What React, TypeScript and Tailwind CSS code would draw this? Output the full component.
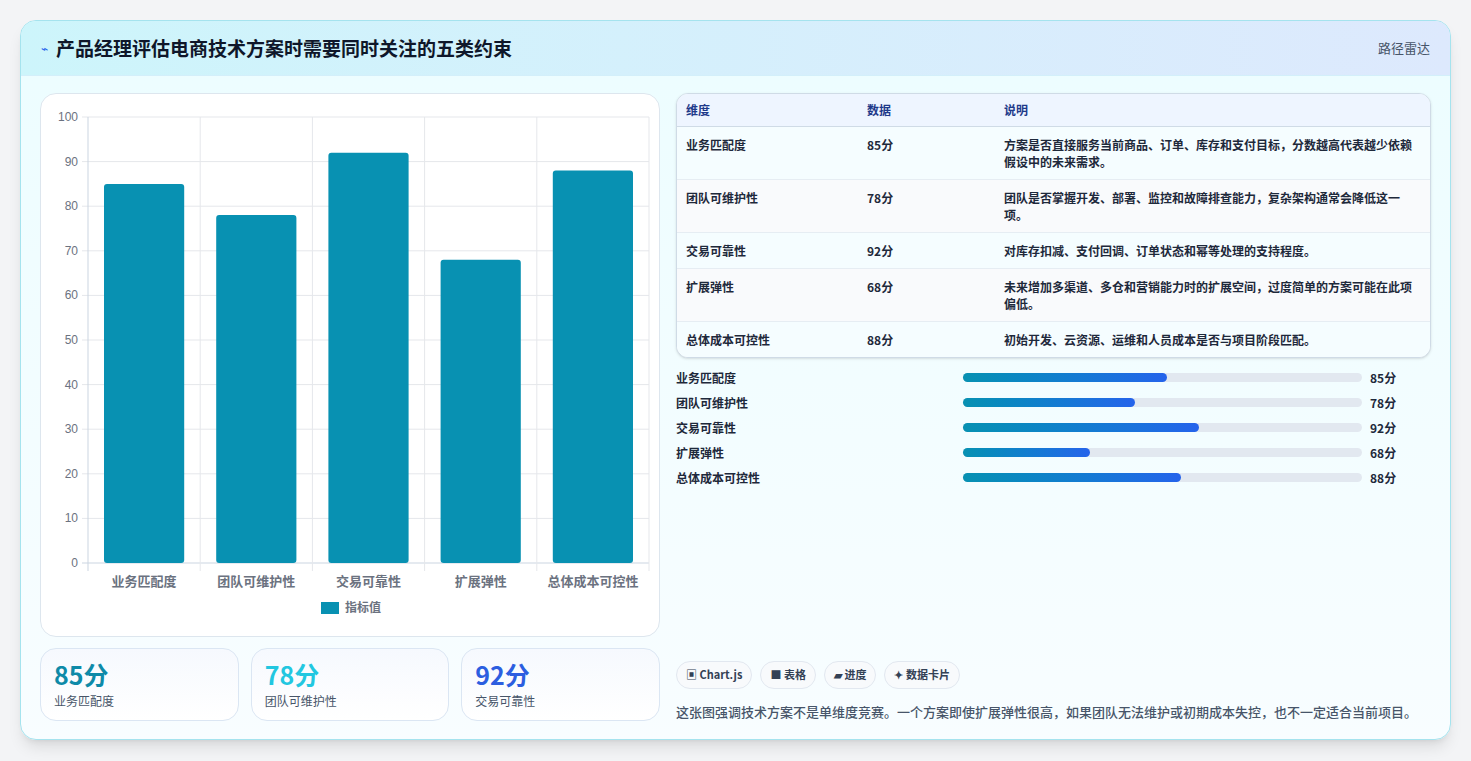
import React from "react";

const F = { fontFamily: '"Noto Sans CJK SC","Noto Sans",sans-serif' };
const items = [
  { n: "业务匹配度", v: 85, d: "方案是否直接服务当前商品、订单、库存和支付目标，分数越高代表越少依赖假设中的未来需求。" },
  { n: "团队可维护性", v: 78, d: "团队是否掌握开发、部署、监控和故障排查能力，复杂架构通常会降低这一项。" },
  { n: "交易可靠性", v: 92, d: "对库存扣减、支付回调、订单状态和幂等处理的支持程度。" },
  { n: "扩展弹性", v: 68, d: "未来增加多渠道、多仓和营销能力时的扩展空间，过度简单的方案可能在此项偏低。" },
  { n: "总体成本可控性", v: 88, d: "初始开发、云资源、运维和人员成本是否与项目阶段匹配。" },
];

function Chart() {
  const L = 47, T = 23, W = 561, H = 446;
  const cw = W / 5;
  return (
    <svg width="619" height="543" style={{ fontFamily: '"Liberation Sans","Noto Sans CJK SC",sans-serif' }}>
      {Array.from({ length: 11 }).map((_, i) => {
        const y = T + (H * i) / 10;
        return (
          <g key={i}>
            <line x1={L - 6} x2={L + W} y1={y} y2={y} stroke={i === 10 ? "#cbd5e1" : "#e5e7eb"} />
            <text x={L - 10} y={y + 4} textAnchor="end" fontSize="12" fill="#6b7280">{100 - i * 10}</text>
          </g>
        );
      })}
      {Array.from({ length: 6 }).map((_, i) => (
        <line key={i} x1={L + i * cw} x2={L + i * cw} y1={T} y2={T + H + 8} stroke={i === 0 ? "#cbd5e1" : "#e5e7eb"} />
      ))}
      {items.map((it, i) => {
        const h = (H * it.v) / 100;
        const x = L + i * cw + 16;
        return (
          <g key={i}>
            <rect x={x} y={T + H - h} width={cw - 32} height={h} rx="3" fill="#0891b2" />
            <text x={L + i * cw + cw / 2} y={T + H + 23} textAnchor="middle" fontSize="13" fontWeight="600" fill="#6b7280">{it.n}</text>
          </g>
        );
      })}
      <rect x="280" y="508" width="18" height="12" fill="#0891b2" />
      <text x="304" y="518" fontSize="12" fontWeight="600" fill="#6b7280">指标值</text>
    </svg>
  );
}

export default function App() {
  return (
    <div className="min-h-[761px] bg-[#f3f4f6] pt-5 px-5" style={F}>
      <div className="w-[1431px] h-[720px] rounded-2xl border border-[#a5e3ee] overflow-hidden bg-gradient-to-b from-[#ecfdff] to-[#f8fdff] shadow-lg flex flex-col">
        <div className="h-[55px] shrink-0 flex items-center justify-between px-5 bg-gradient-to-r from-[#cdf5fb] to-[#dde9fd] border-b border-[#d3effa]">
          <div className="flex items-center gap-2">
            <span className="text-[#2563eb] text-xs">⌁</span>
            <span className="text-[19px] font-bold text-[#0f172a]">产品经理评估电商技术方案时需要同时关注的五类约束</span>
          </div>
          <span className="text-[13px] text-[#475569]">路径雷达</span>
        </div>
        <div className="flex gap-4 px-[19px] pt-[17px] pb-[18px] flex-1">
          <div className="w-[620px] flex flex-col gap-[11px]">
            <div className="h-[544px] rounded-2xl border border-[#dde6ee] bg-white">
              <Chart />
            </div>
            <div className="grid grid-cols-3 gap-3 flex-1">
              {[["85分", "#0e8aa8", "业务匹配度"], ["78分", "#22c7e0", "团队可维护性"], ["92分", "#2c5ee0", "交易可靠性"]].map(([a, c, b]) => (
                <div key={b} className="rounded-2xl border border-[#dbe6f3] bg-gradient-to-b from-[#f6f9fe] to-white px-[13px] pt-[10px]">
                  <div className="text-[25px] font-bold leading-[30px]" style={{ color: c }}>{a}</div>
                  <div className="text-[12px] text-[#475569] mt-[3px]">{b}</div>
                </div>
              ))}
            </div>
          </div>
          <div className="flex-1 flex flex-col">
            <div className="rounded-xl border border-[#cfdbe6] overflow-hidden bg-white text-[12px] text-[#1e293b] shadow-sm">
              <div className="flex h-[33px] items-center bg-[#eef5ff] border-b border-[#cfdbe6] font-semibold text-[#1e3a8a]">
                <div className="w-[190px] pl-[9px]">维度</div>
                <div className="w-[137px]">数据</div>
                <div>说明</div>
              </div>
              {items.map((it, i) => (
                <div key={i} className={`flex py-[9px] leading-[17px] font-semibold ${i % 2 ? "bg-[#f9fafc]" : "bg-[#f5fdff]"} ${i < 4 ? "border-b border-[#e6edf3]" : ""}`}>
                  <div className="w-[190px] pl-[9px]">{it.n}</div>
                  <div className="w-[137px]">{it.v}分</div>
                  <div className="flex-1 pr-2">{it.d}</div>
                </div>
              ))}
            </div>
            <div className="flex flex-col gap-[8px] mt-[11px]">
              {items.map((it, i) => (
                <div key={i} className="flex items-center h-[17px] text-[12px] font-semibold text-[#1e293b]">
                  <div className="w-[287px]">{it.n}</div>
                  <div className="w-[399px] h-[9px] rounded-full bg-[#e2e8f0]">
                    <div className="h-full rounded-full bg-gradient-to-r from-[#0891b2] to-[#2563eb]" style={{ width: `${((it.v - 40) / 88) * 100}%` }} />
                  </div>
                  <div className="ml-2">{it.v}分</div>
                </div>
              ))}
            </div>
            <div className="mt-auto">
              <div className="flex gap-2 text-[11px] font-semibold text-[#334155]">
                {["▣ Chart.js", "■ 表格", "▰ 进度", "✦ 数据卡片"].map((t) => (
                  <span key={t} className="h-[28px] px-[9px] flex items-center rounded-full border border-[#e2e8f0] bg-[#f8fafc]">{t}</span>
                ))}
              </div>
              <div className="mt-[13px] text-[13px] text-[#475569] font-medium">这张图强调技术方案不是单维度竞赛。一个方案即使扩展弹性很高，如果团队无法维护或初期成本失控，也不一定适合当前项目。</div>
            </div>
          </div>
        </div>
      </div>
    </div>
  );
}
